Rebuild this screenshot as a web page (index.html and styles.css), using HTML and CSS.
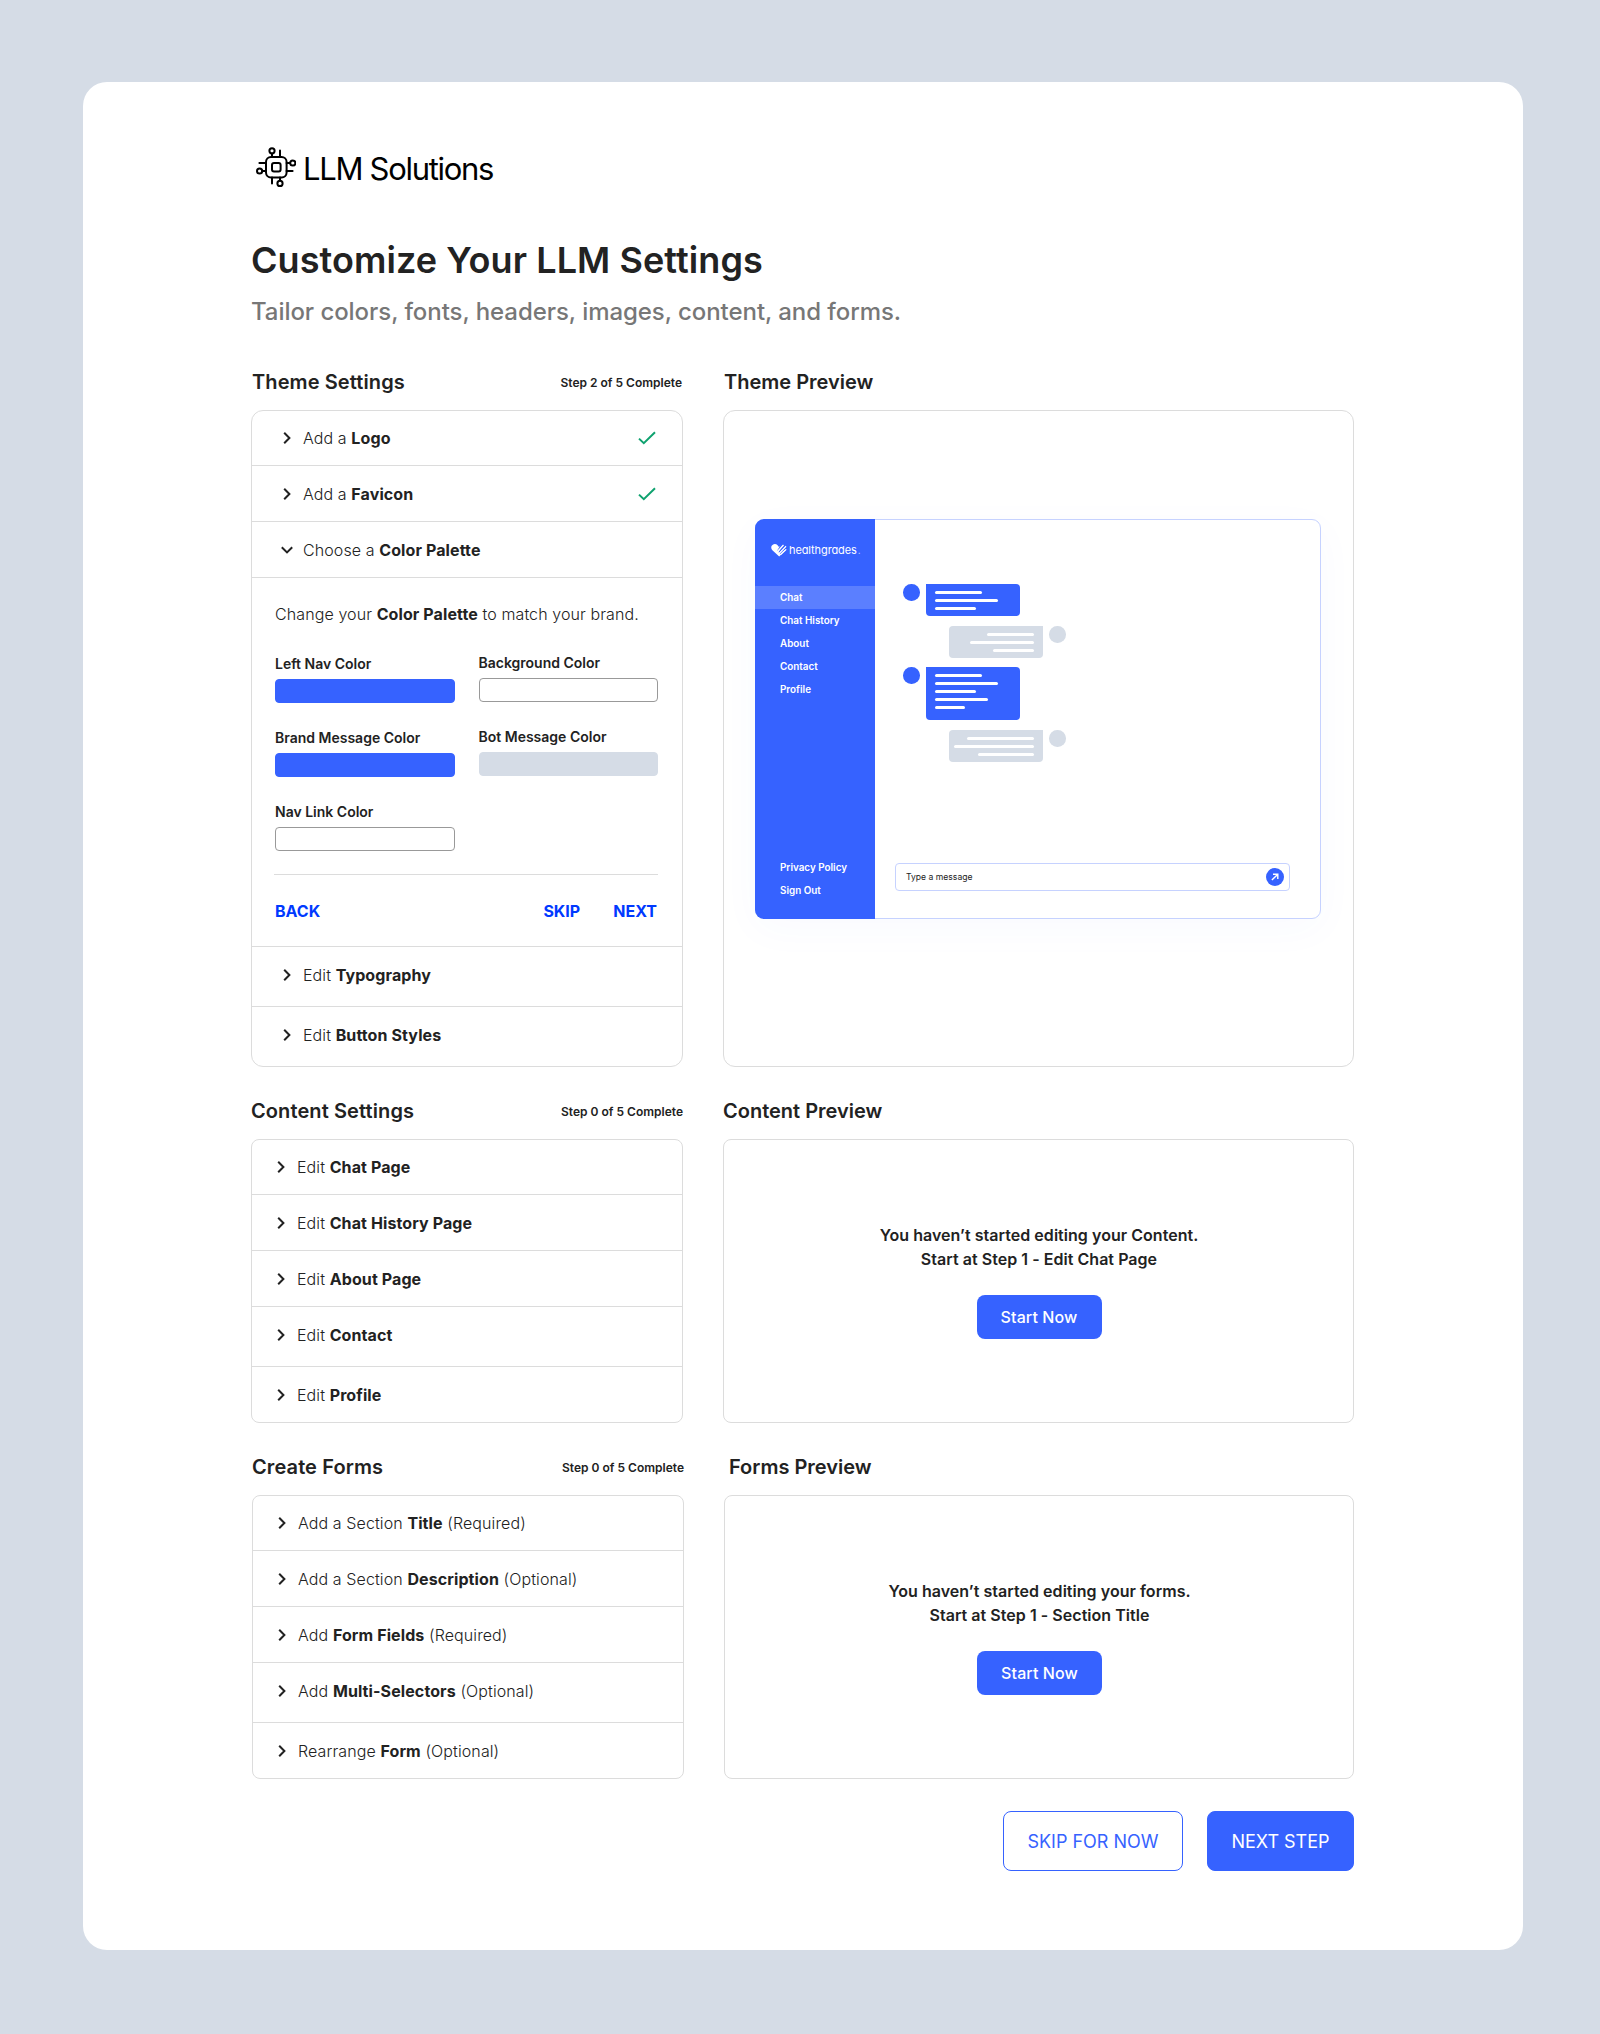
FILE: index.html
```html
<!DOCTYPE html>
<html lang="en">
<head>
    <meta charset="UTF-8">
    <meta name="viewport" content="width=device-width, initial-scale=1.0">
    <title>LLM Solutions</title>
    <link rel="stylesheet" href="styles.css">
</head>
<body>
    <!-- shared icons -->
    <svg class="sprite" width="0" height="0">
        <symbol id="chevron" viewBox="0 0 14 14">
            <path d="M4.2 1.8 9.4 7l-5.2 5.2" fill="none" stroke="#222" stroke-width="2"/>
        </symbol>
        <symbol id="check" viewBox="0 0 18 14">
            <path d="M1 7.6 5.8 12.2 17 1.2" fill="none" stroke="#0fa26f" stroke-width="2"/>
        </symbol>
    </svg>

    <main class="card">
        <header class="brand">
            <svg class="brand-icon" viewBox="0 0 40 40" fill="none" stroke="#000" stroke-width="2" stroke-linecap="round">
                <rect x="10" y="10" width="20.6" height="20.4" rx="5"/>
                <rect x="16" y="16" width="8.6" height="8.4" rx="2"/>
                <circle cx="16" cy="3.8" r="2.6"/>
                <path d="M16 6.6V10M24 3.5V10"/>
                <circle cx="36.8" cy="16" r="2.6"/>
                <path d="M34 16h-3.4M36.6 24h-6"/>
                <circle cx="24" cy="36.4" r="2.6"/>
                <path d="M24 33.6v-3.2M16 36.6v-6.2"/>
                <circle cx="3.6" cy="24" r="2.6"/>
                <path d="M6.4 24H10M3.4 16H10"/>
            </svg>
            <span class="brand-name">LLM Solutions</span>
        </header>

        <h1>Customize Your LLM Settings</h1>
        <p class="subtitle">Tailor colors, fonts, headers, images, content, and forms.</p>

        <section class="group theme">
            <div class="settings">
                <div class="head">
                    <h2>Theme Settings</h2>
                    <span class="step">Step 2 of 5 Complete</span>
                </div>
                <div class="panel">
                    <div class="row"><svg class="chevron"><use href="#chevron"/></svg><span>Add a <b>Logo</b></span><svg class="check"><use href="#check"/></svg></div>
                    <div class="row"><svg class="chevron"><use href="#chevron"/></svg><span>Add a <b>Favicon</b></span><svg class="check"><use href="#check"/></svg></div>
                    <div class="row"><svg class="chevron open"><use href="#chevron"/></svg><span>Choose a <b>Color Palette</b></span></div>
                    <div class="palette">
                        <p class="hint">Change your <b>Color Palette</b> to match your brand.</p>
                        <div class="colors">
                            <div class="column">
                                <div class="field"><label>Left Nav Color</label><div class="swatch blue"></div></div>
                                <div class="field"><label>Brand Message Color</label><div class="swatch blue"></div></div>
                                <div class="field"><label>Nav Link Color</label><div class="swatch"></div></div>
                            </div>
                            <div class="column right">
                                <div class="field"><label>Background Color</label><div class="swatch"></div></div>
                                <div class="field"><label>Bot Message Color</label><div class="swatch gray"></div></div>
                            </div>
                        </div>
                        <div class="links">
                            <a class="link">BACK</a>
                            <a class="link skip">SKIP</a>
                            <a class="link">NEXT</a>
                        </div>
                    </div>
                    <div class="row tall"><svg class="chevron"><use href="#chevron"/></svg><span>Edit <b>Typography</b></span></div>
                    <div class="row tall"><svg class="chevron"><use href="#chevron"/></svg><span>Edit <b>Button Styles</b></span></div>
                </div>
            </div>
            <div class="preview">
                <div class="head"><h2>Theme Preview</h2></div>
                <div class="panel">
                    <div class="mock">
                        <nav class="mock-nav">
                            <div class="mock-logo">
                                <svg class="heart" viewBox="0 0 16 13">
                                    <path d="M8.2 12.6 1.4 6.3C-.3 4.4 0 2 1.5.9 3.2-.3 5.3-.1 6.6 1.3L8 2.9 9.4 1.5 6 6.8 9.8 4.2 7.4 8.4 15.3 5.4z" fill="#fff"/>
                                    <path d="M7.5 6.5 12.5 1M9 8.5 15 2.2M9.4 10.8 15.2 5.3" stroke="#fff" stroke-width="1.3" fill="none"/>
                                    <path d="M8.3 7.8 14 1.6M8.9 9.9 15.6 3.6" stroke="#3662ff" stroke-width=".7" fill="none"/>
                                </svg>
                                <span class="mock-brand">healthgrades</span><span class="mock-dot">.</span>
                            </div>
                            <a class="mock-link active">Chat</a>
                            <a class="mock-link">Chat History</a>
                            <a class="mock-link">About</a>
                            <a class="mock-link">Contact</a>
                            <a class="mock-link">Profile</a>
                            <div class="mock-bottom">
                                <a class="mock-link">Privacy Policy</a>
                                <a class="mock-link">Sign Out</a>
                            </div>
                        </nav>
                        <div class="mock-main">
                            <div class="msg">
                                <i class="avatar"></i>
                                <div class="bubble">
                                    <i style="width: 47px"></i><i style="width: 63.5px"></i><i style="width: 41px"></i>
                                </div>
                            </div>
                            <div class="msg bot">
                                <i class="avatar"></i>
                                <div class="bubble">
                                    <i style="width: 47.5px"></i><i style="width: 64px"></i><i style="width: 41.5px"></i>
                                </div>
                            </div>
                            <div class="msg long">
                                <i class="avatar"></i>
                                <div class="bubble">
                                    <i style="width: 47px"></i><i style="width: 63.5px"></i><i style="width: 41px"></i><i style="width: 53.5px"></i><i style="width: 30px"></i>
                                </div>
                            </div>
                            <div class="msg bot">
                                <i class="avatar"></i>
                                <div class="bubble">
                                    <i style="width: 67px"></i><i style="width: 80px"></i><i style="width: 56.5px"></i>
                                </div>
                            </div>
                            <div class="mock-input">
                                <span>Type a message</span>
                                <svg class="send" viewBox="0 0 18 18">
                                    <circle cx="9" cy="9" r="9" fill="#3662ff"/>
                                    <path d="M5.9 12.1 11.6 6.4M7 6.2h4.8V11" fill="none" stroke="#fff" stroke-width="1.4"/>
                                </svg>
                            </div>
                        </div>
                    </div>
                </div>
            </div>
        </section>

        <section class="group content">
            <div class="settings">
                <div class="head">
                    <h2>Content Settings</h2>
                    <span class="step">Step 0 of 5 Complete</span>
                </div>
                <div class="panel">
                    <div class="row"><svg class="chevron"><use href="#chevron"/></svg><span>Edit <b>Chat Page</b></span></div>
                    <div class="row"><svg class="chevron"><use href="#chevron"/></svg><span>Edit <b>Chat History Page</b></span></div>
                    <div class="row"><svg class="chevron"><use href="#chevron"/></svg><span>Edit <b>About Page</b></span></div>
                    <div class="row"><svg class="chevron"><use href="#chevron"/></svg><span>Edit <b>Contact</b></span></div>
                    <div class="row"><svg class="chevron"><use href="#chevron"/></svg><span>Edit <b>Profile</b></span></div>
                </div>
            </div>
            <div class="preview">
                <div class="head"><h2>Content Preview</h2></div>
                <div class="panel empty">
                    <p>You haven’t started editing your Content.<br>Start at Step 1 - Edit Chat Page</p>
                    <button class="btn-small">Start Now</button>
                </div>
            </div>
        </section>

        <section class="group forms">
            <div class="settings">
                <div class="head">
                    <h2>Create Forms</h2>
                    <span class="step">Step 0 of 5 Complete</span>
                </div>
                <div class="panel">
                    <div class="row"><svg class="chevron"><use href="#chevron"/></svg><span>Add a Section <b>Title</b> (Required)</span></div>
                    <div class="row"><svg class="chevron"><use href="#chevron"/></svg><span>Add a Section <b>Description</b> (Optional)</span></div>
                    <div class="row"><svg class="chevron"><use href="#chevron"/></svg><span>Add <b>Form Fields</b> (Required)</span></div>
                    <div class="row"><svg class="chevron"><use href="#chevron"/></svg><span>Add <b>Multi-Selectors</b> (Optional)</span></div>
                    <div class="row"><svg class="chevron"><use href="#chevron"/></svg><span>Rearrange <b>Form</b> (Optional)</span></div>
                </div>
            </div>
            <div class="preview">
                <div class="head"><h2>Forms Preview</h2></div>
                <div class="panel empty">
                    <p>You haven’t started editing your forms.<br>Start at Step 1 - Section Title</p>
                    <button class="btn-small">Start Now</button>
                </div>
            </div>
        </section>

        <footer class="actions">
            <button class="btn outline">SKIP FOR NOW</button>
            <button class="btn">NEXT STEP</button>
        </footer>
    </main>
</body>
</html>
```
FILE: styles.css
```css
* {
    box-sizing: border-box;
}

body {
    margin: 0;
    padding: 82px 77px 84px 83px;
    background-color: #d5dce6;
    font-family: 'Inter', sans-serif;
    color: #222;
}

h1, h2, p {
    margin: 0;
}

b {
    font-weight: 700;
}

button {
    font-family: inherit;
}

.sprite {
    position: absolute;
}

.card {
    height: 1868px;
    padding: 65px 169px 0 168px;
    background-color: #fff;
    border-radius: 24px;
}

/* Brand */
.brand {
    display: flex;
    align-items: center;
    height: 40px;
    padding-left: 5px;
}

.brand-icon {
    width: 40px;
    height: 40px;
}

.brand-name {
    margin: 3px 0 0 7px;
    font-size: 31px;
    line-height: 40px;
    letter-spacing: -1.3px;
    color: #000;
}

h1 {
    margin-top: 51px;
    font-size: 36px;
    font-weight: 600;
    line-height: 44px;
    letter-spacing: 0.08px;
}

.subtitle {
    margin: 14px 0 27px;
    font-size: 24px;
    font-weight: 500;
    line-height: 31px;
    letter-spacing: -0.06px;
    color: #777;
}

/* Settings groups */
.group {
    display: flex;
    gap: 40px;
    margin-bottom: 16px;
}

.settings {
    width: 432px;
}

.preview {
    flex: 1;
    display: flex;
    flex-direction: column;
}

.forms {
    padding-left: 1px;
}

.head {
    display: flex;
    align-items: center;
    justify-content: space-between;
    height: 56px;
}

h2 {
    font-size: 20px;
    font-weight: 600;
    line-height: 24px;
}

.settings h2 {
    letter-spacing: 0.1px;
}

.theme h2 {
    padding-left: 1px;
}

.forms .preview h2 {
    padding-left: 5px;
}

.step {
    font-size: 12px;
    font-weight: 600;
}

.theme .step {
    padding-right: 1px;
}

.panel {
    border: 1px solid #dcdcdc;
    border-radius: 8px;
}

.theme .panel {
    border-radius: 12px;
}

.preview .panel {
    flex: 1;
}

.row {
    display: flex;
    align-items: center;
    height: 56px;
    padding: 0 26px 0 22px;
    border-bottom: 1px solid #dcdcdc;
    font-size: 16px;
    font-weight: 300;
    letter-spacing: 0.1px;
}

.row:first-child {
    height: 55px;
}

.row:nth-child(4) {
    height: 60px;
    padding-bottom: 4px;
}

.row:last-child {
    height: 55px;
    border-bottom: none;
}

.theme .row {
    padding-left: 28px;
}

.theme .row.tall {
    height: 60px;
    padding-bottom: 3px;
}

.theme .row.tall:last-child {
    height: 59px;
}

.chevron {
    width: 14px;
    height: 14px;
    margin-right: 9px;
}

.chevron.open {
    transform: rotate(90deg);
}

.check {
    width: 18px;
    height: 14px;
    margin-left: auto;
}

/* Color palette */
.palette {
    height: 369px;
    padding: 24px 24px 0 22px;
    border-bottom: 1px solid #dcdcdc;
}

.hint {
    margin-bottom: 1px;
    padding-left: 1px;
    font-size: 16px;
    font-weight: 300;
    line-height: 24px;
    letter-spacing: 0.1px;
}

.colors {
    display: flex;
    gap: 24px;
    height: 248px;
    padding-left: 1px;
    border-bottom: 1px solid #dcdcdc;
}

.column {
    width: 180px;
    padding-top: 28px;
}

.column.right {
    padding-top: 27px;
}

.field {
    height: 74px;
}

.field label {
    display: block;
    font-size: 14px;
    font-weight: 600;
    line-height: 18px;
}

.swatch {
    height: 24px;
    margin-top: 6px;
    border: 1px solid #999;
    border-radius: 4px;
}

.swatch.blue {
    background-color: #3662ff;
    border-color: #3662ff;
}

.swatch.gray {
    background-color: #d5dce6;
    border-color: #d5dce6;
}

.links {
    display: flex;
    gap: 33px;
    padding: 24px 1px 0;
}

.link {
    font-size: 16px;
    font-weight: 700;
    line-height: 25px;
    color: #0039ff;
}

.link.skip {
    margin-left: auto;
}

/* Theme preview */
.theme .preview .panel {
    padding: 108px 31px 0;
}

.mock {
    display: flex;
    width: 566px;
    height: 400px;
    background-color: #fff;
    border: 1px solid #c6d2ff;
    border-radius: 9px;
    box-shadow: 0 10px 40px rgba(54, 98, 255, 0.03);
}

.mock-nav {
    display: flex;
    flex-direction: column;
    width: 120px;
    margin: -1px 0 -1px -1px;
    background-color: #3662ff;
    border-radius: 9px 0 0 9px;
}

.mock-logo {
    display: flex;
    align-items: center;
    height: 67px;
    padding: 0 0 5px 16px;
    color: #fff;
}

.heart {
    width: 16px;
    height: 13px;
}

.mock-brand {
    margin-left: 2px;
    font-size: 11px;
    line-height: 14px;
    letter-spacing: -0.1px;
    font-feature-settings: 'cv11';
}

.mock-dot {
    margin-left: 1px;
    font-size: 10px;
    opacity: 0.7;
}

.mock-link {
    height: 23px;
    padding-left: 25px;
    font-size: 9.9px;
    font-weight: 600;
    line-height: 23px;
    color: #fff;
}

.mock-link.active {
    background-color: #5b7fff;
}

.mock-bottom {
    display: flex;
    flex-direction: column;
    margin: auto 0 17px;
}

.mock-main {
    flex: 1;
    padding: 64px 0 0 28px;
}

.msg {
    display: flex;
    gap: 6px;
    height: 32px;
    margin-bottom: 10px;
}

.msg.long {
    height: 53px;
}

.msg.bot {
    flex-direction: row-reverse;
    justify-content: flex-end;
    margin-left: 46px;
    margin-bottom: 9px;
}

.avatar {
    width: 16.5px;
    height: 16.5px;
    border-radius: 50%;
    background-color: #3662ff;
}

.bubble {
    display: flex;
    flex-direction: column;
    gap: 5.2px;
    width: 94px;
    padding: 6.5px 9px 0;
    border-radius: 0 4px 4px 4px;
    background-color: #3662ff;
}

.bubble i {
    height: 3px;
    border-radius: 2px;
    background-color: #fff;
}

.bot .avatar, .bot .bubble {
    background-color: #d5dce6;
}

.bot .bubble {
    align-items: flex-end;
    border-radius: 4px 0 4px 4px;
}

.mock-input {
    display: flex;
    align-items: center;
    justify-content: space-between;
    width: 395px;
    height: 28px;
    margin: 101px 0 0 -8px;
    padding: 0 5px 0 10px;
    border: 1px solid #c6d2ff;
    border-radius: 4px;
    font-size: 8.6px;
}

.send {
    width: 18px;
    height: 18px;
}

/* Empty previews */
.empty {
    display: flex;
    flex-direction: column;
    align-items: center;
    padding: 83px 0 0 1px;
    font-size: 16px;
    font-weight: 600;
    line-height: 24px;
    letter-spacing: 0.04px;
    text-align: center;
}

.btn-small {
    width: 125px;
    height: 44px;
    margin-top: 24px;
    background-color: #3662ff;
    border: none;
    border-radius: 8px;
    color: #fff;
    font-size: 16px;
    font-weight: 450;
    letter-spacing: 0.1px;
}

/* Page actions */
.actions {
    display: flex;
    justify-content: flex-end;
    gap: 24px;
    margin-top: 32px;
}

.btn {
    width: 147px;
    height: 60px;
    background-color: #3662ff;
    border: 1px solid #3662ff;
    border-radius: 8px;
    color: #fff;
    font-size: 18px;
    font-weight: 400;
}

.btn.outline {
    width: 180px;
    background-color: #fff;
    color: #3662ff;
}
```
